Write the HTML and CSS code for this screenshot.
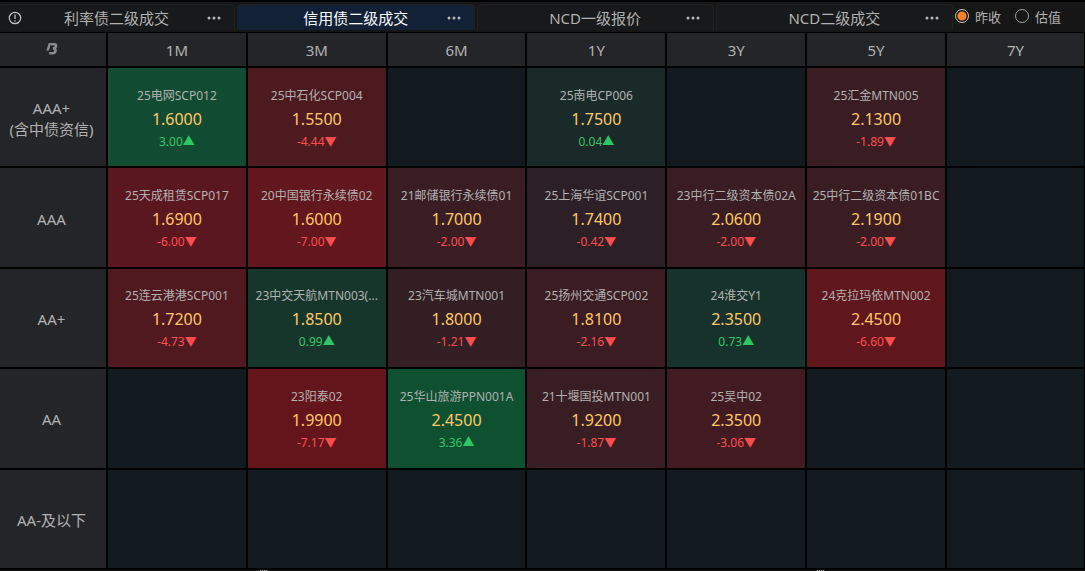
FILE: index.html
```html
<!DOCTYPE html>
<html lang="zh-CN">
<head>
    <meta charset="UTF-8">
    <meta name="viewport" content="width=device-width, initial-scale=1.0">
    <title>信用债二级成交</title>
    <link rel="stylesheet" href="styles.css">
</head>
<body>
    <header class="topbar">
        <nav class="tabs">
            <div class="tab">
                <button class="icon-btn info" aria-label="说明">
                    <svg width="14" height="14" viewBox="0 0 14 14">
                        <circle cx="7" cy="7" r="5.7" fill="none" stroke="currentColor" stroke-width="1.2"/>
                        <path d="M7 3.5V8" stroke="currentColor" stroke-width="1.3"/>
                        <circle cx="7" cy="10" r="0.8" fill="currentColor"/>
                    </svg>
                </button>
                <button class="tab-name">利率债二级成交</button>
                <button class="icon-btn more" aria-label="更多"><svg width="14" height="4" viewBox="0 0 14 4"><circle cx="2" cy="2" r="1.5"/><circle cx="7" cy="2" r="1.5"/><circle cx="12" cy="2" r="1.5"/></svg></button>
            </div>
            <div class="tab active">
                <button class="tab-name">信用债二级成交</button>
                <button class="icon-btn more" aria-label="更多"><svg width="14" height="4" viewBox="0 0 14 4"><circle cx="2" cy="2" r="1.5"/><circle cx="7" cy="2" r="1.5"/><circle cx="12" cy="2" r="1.5"/></svg></button>
            </div>
            <div class="tab">
                <button class="tab-name">NCD一级报价</button>
                <button class="icon-btn more" aria-label="更多"><svg width="14" height="4" viewBox="0 0 14 4"><circle cx="2" cy="2" r="1.5"/><circle cx="7" cy="2" r="1.5"/><circle cx="12" cy="2" r="1.5"/></svg></button>
            </div>
            <div class="tab">
                <button class="tab-name">NCD二级成交</button>
                <button class="icon-btn more" aria-label="更多"><svg width="14" height="4" viewBox="0 0 14 4"><circle cx="2" cy="2" r="1.5"/><circle cx="7" cy="2" r="1.5"/><circle cx="12" cy="2" r="1.5"/></svg></button>
            </div>
        </nav>
        <div class="compare">
            <label><input type="radio" name="compare" checked>昨收</label>
            <label><input type="radio" name="compare">估值</label>
        </div>
    </header>

    <main class="board">
        <table class="matrix">
            <thead>
                <tr>
                    <th class="corner">
                        <svg width="12" height="13" viewBox="0 0 12 13" role="img" aria-label="logo">
                            <path d="M2.8 1H5L3 8.5H0.3Z" fill="#8c8c8c"/>
                            <path d="M4.6 2.3H8.4Q10.2 2.3 10 4Q9.8 6.2 7 6.4Q9.9 6.5 9.6 8.6Q9.2 11.2 6.6 11.2H3.2" fill="none" stroke="#8c8c8c" stroke-width="2.6"/>
                        </svg>
                    </th>
                    <th>1M</th>
                    <th>3M</th>
                    <th>6M</th>
                    <th>1Y</th>
                    <th>3Y</th>
                    <th>5Y</th>
                    <th class="last">7Y</th>
                </tr>
            </thead>
            <tbody>
                <tr>
                    <th>AAA+<br>(含中债资信)</th>
                    <td style="background-color: #114b31"><div class="name">25电网SCP012</div><div class="price">1.6000</div><div class="change up">3.00<i>▲</i></div></td>
                    <td style="background-color: #4d1a1f"><div class="name">25中石化SCP004</div><div class="price">1.5500</div><div class="change down">-4.44<i>▼</i></div></td>
                    <td></td>
                    <td style="background-color: #192a28"><div class="name">25南电CP006</div><div class="price">1.7500</div><div class="change up">0.04<i>▲</i></div></td>
                    <td></td>
                    <td style="background-color: #391d22"><div class="name">25汇金MTN005</div><div class="price">2.1300</div><div class="change down">-1.89<i>▼</i></div></td>
                    <td></td>
                </tr>
                <tr>
                    <th>AAA</th>
                    <td style="background-color: #5b171f"><div class="name">25天成租赁SCP017</div><div class="price">1.6900</div><div class="change down">-6.00<i>▼</i></div></td>
                    <td style="background-color: #62161d"><div class="name">20中国银行永续债02</div><div class="price">1.6000</div><div class="change down">-7.00<i>▼</i></div></td>
                    <td style="background-color: #391d23"><div class="name">21邮储银行永续债01</div><div class="price">1.7000</div><div class="change down">-2.00<i>▼</i></div></td>
                    <td style="background-color: #2c1f25"><div class="name">25上海华谊SCP001</div><div class="price">1.7400</div><div class="change down">-0.42<i>▼</i></div></td>
                    <td style="background-color: #391d23"><div class="name">23中行二级资本债02A</div><div class="price">2.0600</div><div class="change down">-2.00<i>▼</i></div></td>
                    <td style="background-color: #391d23"><div class="name">25中行二级资本债01BC</div><div class="price">2.1900</div><div class="change down">-2.00<i>▼</i></div></td>
                    <td></td>
                </tr>
                <tr>
                    <th>AA+</th>
                    <td style="background-color: #50191f"><div class="name">25连云港港SCP001</div><div class="price">1.7200</div><div class="change down">-4.73<i>▼</i></div></td>
                    <td style="background-color: #17362b"><div class="name">23中交天航MTN003(...</div><div class="price">1.8500</div><div class="change up">0.99<i>▲</i></div></td>
                    <td style="background-color: #331e23"><div class="name">23汽车城MTN001</div><div class="price">1.8000</div><div class="change down">-1.21<i>▼</i></div></td>
                    <td style="background-color: #3a1c22"><div class="name">25扬州交通SCP002</div><div class="price">1.8100</div><div class="change down">-2.16<i>▼</i></div></td>
                    <td style="background-color: #17322a"><div class="name">24淮交Y1</div><div class="price">2.3500</div><div class="change up">0.73<i>▲</i></div></td>
                    <td style="background-color: #5f161d"><div class="name">24克拉玛依MTN002</div><div class="price">2.4500</div><div class="change down">-6.60<i>▼</i></div></td>
                    <td></td>
                </tr>
                <tr>
                    <th>AA</th>
                    <td></td>
                    <td style="background-color: #64151c"><div class="name">23阳泰02</div><div class="price">1.9900</div><div class="change down">-7.17<i>▼</i></div></td>
                    <td style="background-color: #0f5031"><div class="name">25华山旅游PPN001A</div><div class="price">2.4500</div><div class="change up">3.36<i>▲</i></div></td>
                    <td style="background-color: #381d22"><div class="name">21十堰国投MTN001</div><div class="price">1.9200</div><div class="change down">-1.87<i>▼</i></div></td>
                    <td style="background-color: #421b22"><div class="name">25吴中02</div><div class="price">2.3500</div><div class="change down">-3.06<i>▼</i></div></td>
                    <td></td>
                    <td></td>
                </tr>
                <tr>
                    <th>AA-及以下</th>
                    <td></td>
                    <td></td>
                    <td></td>
                    <td></td>
                    <td></td>
                    <td></td>
                    <td></td>
                </tr>
            </tbody>
        </table>
    </main>
    <footer class="splitter"><span class="grip"></span><span class="grip"></span></footer>
</body>
</html>
```
FILE: styles.css
```css
* {
    margin: 0;
    padding: 0;
    box-sizing: border-box;
}

body {
    display: flex;
    flex-direction: column;
    min-height: 100vh;
    background: #000;
    color: #b2b2b2;
    font-family: "Noto Sans", "Noto Sans CJK SC", sans-serif;
    font-size: 15px;
}

button {
    border: none;
    background: none;
    color: inherit;
    font: inherit;
    cursor: pointer;
}

/* top bar */
.topbar {
    display: flex;
    height: 33px;
    border-top: 2px solid #000;
    border-bottom: 1px solid #000;
    background: #161616;
}

.tabs {
    display: flex;
    flex: 1;
    gap: 2px;
    margin-left: -2px;
    padding-top: 2px;
}

.tab {
    display: grid;
    grid-template-columns: 40px 1fr 40px;
    align-items: center;
    flex: 1;
    height: 26px;
    border: 1px solid #202122;
    border-bottom: none;
    border-radius: 4px 4px 0 0;
    background: #18191a;
}

.tab.active {
    background: #132136;
    color: #fff;
}

.tab-name {
    grid-column: 2;
    line-height: 24px;
    white-space: nowrap;
}

.icon-btn {
    display: flex;
    color: #c4c4c4;
}

.info {
    padding-left: 9px;
}

.more {
    grid-column: 3;
    justify-content: center;
    fill: #b8b8b8;
}

.compare {
    display: flex;
    gap: 14px;
    width: 132px;
    padding: 0 2px;
    font-size: 13px;
}

.compare label {
    display: flex;
    align-items: center;
    gap: 6px;
    height: 28px;
    white-space: nowrap;
}

.compare input {
    appearance: none;
    width: 14px;
    height: 14px;
    border: 1px solid #a0a0a0;
    border-radius: 50%;
}

.compare input:checked {
    border-color: #c8c8c8;
    background: radial-gradient(circle, #ff8227 4px, transparent 5px);
}

/* rating / term matrix */
.board {
    display: flex;
    flex: 1;
}

.matrix {
    width: 100%;
    table-layout: fixed;
    border-spacing: 0;
    text-align: center;
}

.matrix th,
.matrix td {
    border-right: 2px solid #000;
    border-bottom: 2px solid #000;
    vertical-align: middle;
}

.matrix tr > :last-child {
    border-right-width: 1px;
}

.matrix th {
    padding-top: 2px;
    background: #242529;
    font-weight: normal;
    line-height: 21px;
}

.matrix tbody th {
    padding: 3px 3px 0 0;
}

.matrix thead th {
    height: 35px;
}

.matrix .corner {
    width: 108px;
    padding: 0 2px 2px 0;
}

.matrix .last {
    width: 138px;
}

.corner svg {
    display: block;
    margin: 0 auto;
}

.matrix td {
    height: 100px;
    padding: 2px 4px 0;
    background: #12191f;
}

.name {
    overflow: hidden;
    font-size: 12px;
    line-height: 23px;
    text-overflow: ellipsis;
    white-space: nowrap;
}

.price {
    color: #ffc864;
    font-size: 16px;
    line-height: 24px;
}

.change {
    font-size: 12px;
    line-height: 22px;
}

.change i {
    font-family: "Noto Sans CJK SC", sans-serif;
    font-style: normal;
    line-height: 1;
}

.up {
    color: #2dc864;
}

.down {
    color: #ff4d4f;
}

/* drag handle strip */
.splitter {
    display: flex;
    justify-content: space-between;
    height: 1px;
    padding: 0 24%;
    background: #161616;
}

.grip {
    width: 8px;
    background: repeating-linear-gradient(90deg, #aaa 0 1px, #333 1px 2px);
}
```
